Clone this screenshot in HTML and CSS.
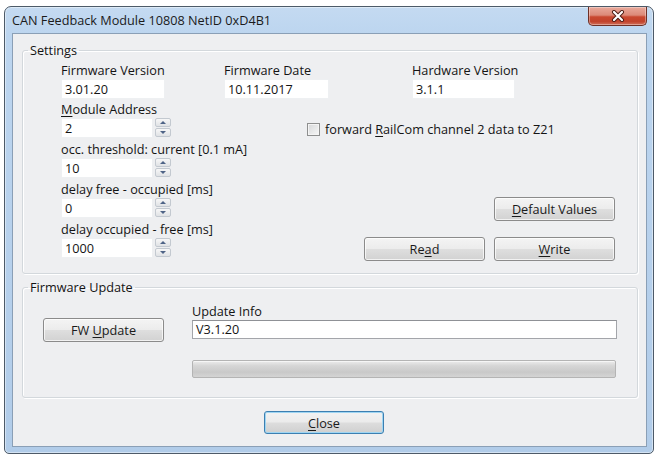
FILE: index.html
```html
<!DOCTYPE html>
<html>
<head>
<meta charset="utf-8">
<title>CAN Feedback Module</title>
<link rel="stylesheet" href="styles.css">
</head>
<body>
<div class="window">
  <div class="titlebar">
    <span class="title">CAN Feedback Module 10808 NetID 0xD4B1</span>
    <div class="close-x">
      <svg width="16" height="12" viewBox="0 0 16 12">
        <path d="M4 2 L12 10 M12 2 L4 10" stroke="#4a1a12" stroke-width="4" stroke-linecap="round" fill="none"/>
        <path d="M4 2 L12 10 M12 2 L4 10" stroke="#ffffff" stroke-width="2.2" stroke-linecap="round" fill="none"/>
      </svg>
    </div>
  </div>
  <div class="client">
    <fieldset class="group settings">
      <legend>Settings</legend>
      <div class="settings-inner">
        <div class="top-row">
          <div class="field"><div class="lbl">Firmware Version</div><div class="tb w104">3.01.20</div></div>
          <div class="field"><div class="lbl">Firmware Date</div><div class="tb w105">10.11.2017</div></div>
          <div class="field"><div class="lbl">Hardware Version</div><div class="tb w103">3.1.1</div></div>
        </div>
        <div class="lower">
          <div class="spins">
            <div class="field"><div class="lbl"><u>M</u>odule Address</div>
              <div class="spin"><div class="tb w92">2</div><div class="spin-btns"><span class="sb up"></span><span class="sb down"></span></div></div></div>
            <div class="field"><div class="lbl">occ. threshold: current [0.1 mA]</div>
              <div class="spin"><div class="tb w92">10</div><div class="spin-btns"><span class="sb up"></span><span class="sb down"></span></div></div></div>
            <div class="field"><div class="lbl">delay free - occupied [ms]</div>
              <div class="spin"><div class="tb w92">0</div><div class="spin-btns"><span class="sb up"></span><span class="sb down"></span></div></div></div>
            <div class="field"><div class="lbl">delay occupied - free [ms]</div>
              <div class="spin"><div class="tb w92">1000</div><div class="spin-btns"><span class="sb up"></span><span class="sb down"></span></div></div></div>
          </div>
          <div class="right">
            <div class="check-row"><span class="checkbox"></span><span>forward <u>R</u>ailCom channel 2 data to Z21</span></div>
            <div class="btn-row first"><div class="btn w121"><span><u>D</u>efault Values</span></div></div>
            <div class="btn-row"><div class="btn w121"><span>Re<u>a</u>d</span></div><div class="btn w121"><span><u>W</u>rite</span></div></div>
          </div>
        </div>
      </div>
    </fieldset>
    <fieldset class="group fw">
      <legend>Firmware Update</legend>
      <div class="fw-inner">
        <div class="btn w121 fw-btn"><span>FW <u>U</u>pdate</span></div>
        <div class="fw-right">
          <div class="lbl">Update Info</div>
          <div class="tb info">V3.1.20</div>
          <div class="progress"></div>
        </div>
      </div>
    </fieldset>
    <div class="footer">
      <div class="btn close-btn"><span><u>C</u>lose</span></div>
    </div>
  </div>
</div>
</body>
</html>
```

FILE: styles.css
```css
* { box-sizing: border-box; }
html, body { margin: 0; padding: 0; background: #ffffff; }
body {
  font-family: "Open Sans", "Noto Sans", "DejaVu Sans", sans-serif;
  font-size: 12.7px;
  line-height: 16px;
  color: #141414;
}
u { text-decoration: underline; text-underline-offset: 2px; }

.window {
  width: 650px;
  height: 448px;
  margin: 6px 0 0 4px;
  border: 1px solid #4d5a68;
  border-radius: 7px 7px 5px 5px;
  background: linear-gradient(to bottom, #c4daf1 0, #bcd5ef 28px, #b1cce9 100%);
  box-shadow: inset 0 0 0 1px rgba(255,255,255,0.45);
  padding: 0 6px 6px 7px;
  display: flex;
  flex-direction: column;
}

.titlebar {
  height: 26px;
  display: flex;
  align-items: flex-start;
}
.title {
  margin-top: 5px;
  color: #1b1b1b;
}
.close-x {
  margin-left: auto;
  width: 59px;
  height: 19px;
  border: 1px solid #6e3026;
  border-top: none;
  border-radius: 0 0 5px 5px;
  background: linear-gradient(to bottom, #e9a99b 0%, #dc8a78 45%, #c9482f 55%, #c2432c 80%, #d0705a 100%);
  box-shadow: inset 0 0 0 1px rgba(255,255,255,0.35);
  display: flex;
  align-items: center;
  justify-content: center;
}

.client {
  flex: 1;
  border: 1px solid #8a9fb6;
  background: #eeeff1;
  padding: 0 8px 0 9px;
}

.group {
  margin: 0;
  padding: 0;
  min-width: 0;
  border: 1px solid #d3d8dc;
  border-radius: 3px;
  box-shadow: inset 1px 1px 0 #ffffff, 1px 1px 0 #ffffff;
}
.group legend {
  padding: 0 2px;
  margin-left: 5px;
  line-height: 16px;
}

.settings { margin-top: 8px; }
.settings-inner { padding: 4px 22px 12px 38px; }

.top-row {
  display: grid;
  grid-template-columns: 163px 188px 1fr;
}
.lbl { height: 16px; white-space: nowrap; }
.tb {
  height: 20px;
  margin-top: 1px;
  background: #ffffff;
  border: 1px solid #eef0f2;
  padding-left: 3px;
  line-height: 18px;
  white-space: nowrap;
}
.w104 { width: 104px; }
.w105 { width: 105px; }
.w103 { width: 103px; }
.w92 { width: 92px; }

.lower {
  margin-top: 2px;
  display: flex;
}
.spins {
  width: 110px;
  display: flex;
  flex-direction: column;
  gap: 3px;
}
.spin {
  display: flex;
  align-items: flex-start;
  gap: 2px;
}
.spin-btns {
  margin-top: 1px;
  display: flex;
  flex-direction: column;
  gap: 1px;
}
.sb {
  display: flex;
  align-items: center;
  justify-content: center;
  width: 16px;
  height: 9px;
  border: 1px solid #c3c9d0;
  border-radius: 2px;
  background: linear-gradient(to bottom, #f7f7f7, #e0e2e5);
}
.sb::after {
  content: "";
  width: 0;
  height: 0;
  border-left: 3px solid transparent;
  border-right: 3px solid transparent;
}
.sb.up::after { border-bottom: 3px solid #4e6386; }
.sb.down::after { border-top: 3px solid #4e6386; }

.right {
  flex: 1;
  display: flex;
  flex-direction: column;
}
.check-row {
  margin-top: 20px;
  padding-left: 136px;
  display: flex;
  align-items: center;
  gap: 5px;
  white-space: nowrap;
}
.checkbox {
  width: 13px;
  height: 13px;
  border: 1px solid #8e8f8f;
  background: linear-gradient(135deg, #d6d7d9, #f7f7f7);
  box-shadow: inset 0 0 0 1px #f4f4f4;
}
.btn-row {
  display: flex;
  justify-content: flex-end;
  gap: 9px;
  margin-top: 16px;
}
.btn-row.first { margin-top: 60px; }

.btn {
  height: 24px;
  border: 1px solid #8b8b8b;
  border-radius: 3px;
  background: linear-gradient(to bottom, #f4f4f4 0%, #ececec 48%, #dedede 52%, #d2d2d2 100%);
  box-shadow: inset 0 0 0 1px rgba(255,255,255,0.7);
  display: flex;
  align-items: center;
  justify-content: center;
  white-space: nowrap;
  color: #1a1a1a;
}
.w121 { width: 121px; }

.fw { margin-top: 5px; }
.fw-inner {
  display: flex;
  padding: 0 20px 19px 20px;
}
.fw-btn { margin-top: 23px; }
.fw-right {
  margin-left: 28px;
  width: 425px;
  padding-top: 8px;
}
.tb.info {
  height: 19px;
  border: 1px solid #a3a5aa;
  border-top-color: #8f9196;
  line-height: 17px;
}
.progress {
  margin-top: 21px;
  width: 424px;
  height: 18px;
  border: 1px solid #b4b4b4;
  border-radius: 2px;
  background: linear-gradient(to bottom, #ececec 0%, #d6d6d6 30%, #c9c9c9 70%, #d4d4d4 100%);
  box-shadow: inset 0 1px 0 #f6f6f6;
}

.footer {
  margin-top: 13px;
  padding-left: 242px;
}
.close-btn {
  width: 120px;
  height: 23px;
  border: 1px solid #3c7fb1;
  box-shadow: inset 0 0 0 1px #9fd5f2;
  background: linear-gradient(to bottom, #f2f2f2 0%, #ebebeb 48%, #dddddd 52%, #cfcfcf 100%);
}
```
